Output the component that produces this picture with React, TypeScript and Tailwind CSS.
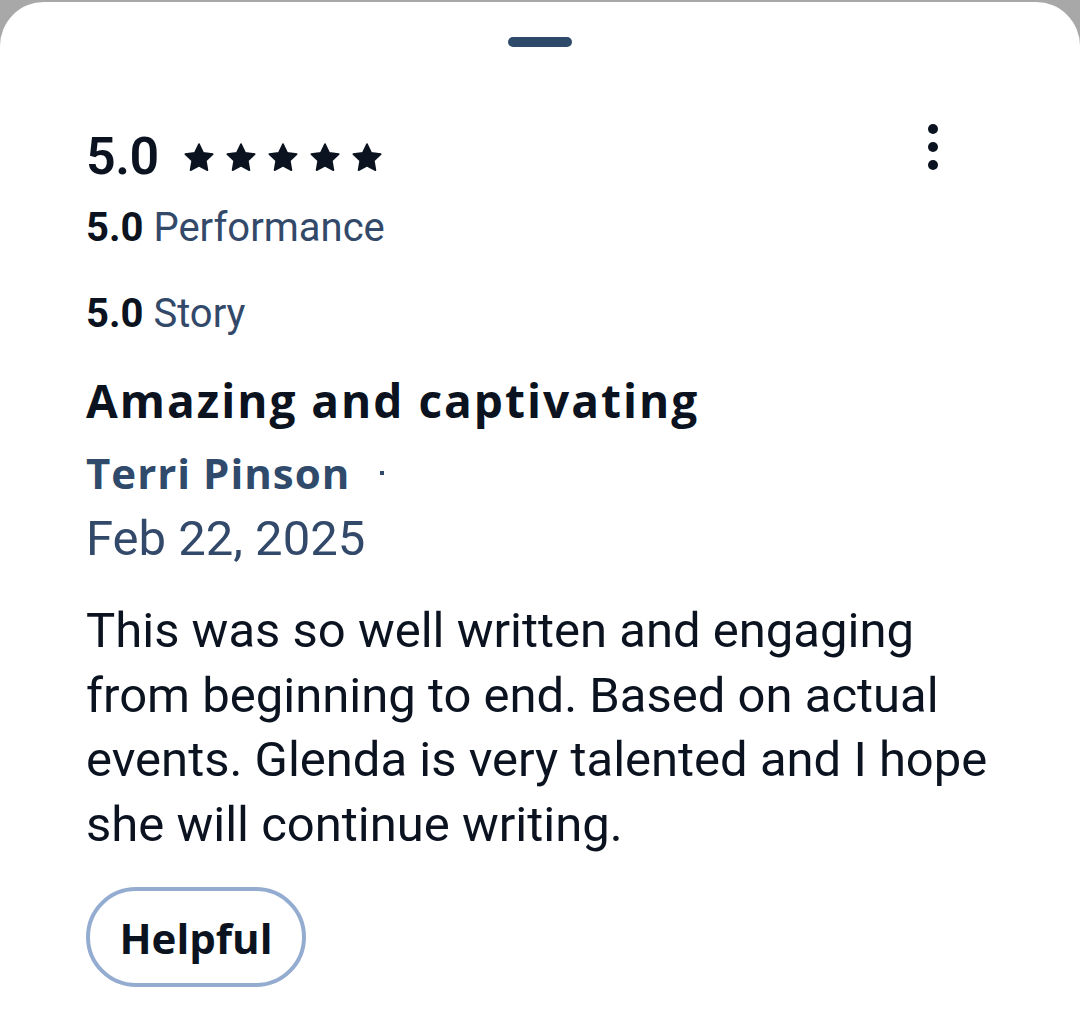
import React from 'react';

const Star = () => (
  <svg width="34" height="34" viewBox="0 0 24 24" className="shrink-0">
    <path
      d="M12 2.2l2.95 6.1 6.7.95-4.85 4.7 1.15 6.65L12 17.45 6.05 20.6l1.15-6.65L2.35 9.25l6.7-.95L12 2.2z"
      fill="#0b1320"
      stroke="#0b1320"
      strokeWidth="1.2"
      strokeLinejoin="round"
    />
  </svg>
);

const SubRating = ({ score, label }: { score: string; label: string }) => (
  <div className="text-[40px] leading-[40px]">
    <span className="font-bold text-[#0b1320]">{score}</span>{' '}
    <span className="text-[#33496a]">{label}</span>
  </div>
);

const wide = { fontFamily: '"Open Sans", Roboto, sans-serif' };

export default function App() {
  return (
    <div className="bg-[#a8a8a8] pt-[2px] h-[1020px]" style={{ fontFamily: 'Roboto, "Noto Sans", sans-serif' }}>
      <div className="bg-white rounded-t-[44px] h-full flex flex-col">
        {/* drag handle */}
        <div className="flex justify-center pt-[35px]">
          <div className="w-[64px] h-[10px] rounded-full bg-[#2e4a6b]" />
        </div>

        <div className="pl-[86px] pt-[77px] flex flex-col">
          {/* overall rating */}
          <div className="flex items-center w-[852px]">
            <span className="text-[52px] leading-[52px] font-semibold text-[#0b1320] tracking-[-0.5px]">5.0</span>
            <div className="flex items-center gap-[8px] ml-[23px] mt-[2px]">
              <Star />
              <Star />
              <Star />
              <Star />
              <Star />
            </div>
            <div className="ml-auto mb-[19px] flex flex-col items-center gap-[8px]">
              <div className="size-[10px] rounded-full bg-[#0b1320]" />
              <div className="size-[10px] rounded-full bg-[#0b1320]" />
              <div className="size-[10px] rounded-full bg-[#0b1320]" />
            </div>
          </div>

          <div className="mt-[19px]">
            <SubRating score="5.0" label="Performance" />
          </div>
          <div className="mt-[46px]">
            <SubRating score="5.0" label="Story" />
          </div>

          <h2 className="mt-[43px] text-[46px] leading-[46px] font-bold text-[#0b1320] tracking-[2px]" style={wide}>
            Amazing and captivating
          </h2>

          <div className="mt-[30px] flex items-center text-[42px] leading-[40px] font-bold text-[#2f4a6b] tracking-[1px]" style={wide}>
            <span>Terri Pinson</span>
            <span className="ml-[30px] size-[4px] bg-[#2f4a6b]" />
          </div>

          <div className="mt-[23px] text-[49px] leading-[46px] text-[#33496a]">Feb 22, 2025</div>

          <p className="mt-[37px] text-[49px] leading-[64.5px] text-[#0b1320]">
            This was so well written and engaging
            <br />
            from beginning to end. Based on actual
            <br />
            events. Glenda is very talented and I hope
            <br />
            she will continue writing.
          </p>

          <div className="mt-[30px]">
            <button
              className="w-[220px] h-[100px] rounded-full border-[4px] border-[#94acd0] text-[42px] font-bold text-[#0b1320] flex items-center justify-center"
              style={wide}
            >
              Helpful
            </button>
          </div>
        </div>
      </div>
    </div>
  );
}
